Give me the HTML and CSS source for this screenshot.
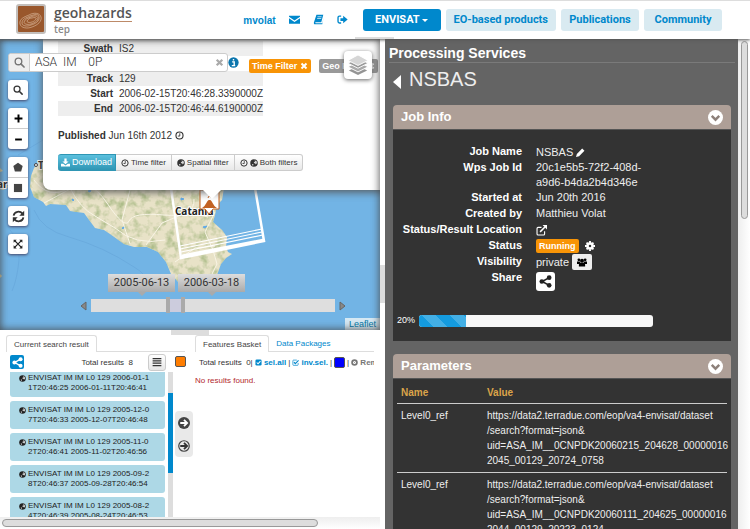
FILE: index.html
```html
<!DOCTYPE html>
<html lang="en">
<head>
<meta charset="utf-8">
<title>Geohazards TEP</title>
<link rel="stylesheet" href="styles.css">
</head>
<body>
<svg class="defs" aria-hidden="true">
  <symbol id="search" viewBox="0 0 16 16"><circle cx="6.5" cy="6.5" r="4.8" fill="none" stroke="currentColor" stroke-width="2"/><path d="M10 10l4.6 4.6" stroke="currentColor" stroke-width="2.4" stroke-linecap="round"/></symbol>
  <symbol id="globe" viewBox="0 0 16 16"><circle cx="8" cy="8" r="7.5" fill="currentColor"/><path d="M9 3l4 1 1 4-2.500 3-1-2-3-1 1-2.500 2 .5zM4 10l3 .5-.5 2.500h-2z" fill="#fff" opacity=".8"/></symbol>
  <symbol id="clock" viewBox="0 0 16 16"><circle cx="8" cy="8" r="6.300" fill="none" stroke="currentColor" stroke-width="2"/><path d="M8.500 4v5H5" fill="none" stroke="currentColor" stroke-width="1.600"/></symbol>
  <symbol id="share" viewBox="0 0 16 16"><path d="M12.500 3.200L4 8l8.500 4.800" fill="none" stroke="currentColor" stroke-width="2"/><circle cx="12.500" cy="3.300" r="2.900" fill="currentColor"/><circle cx="3.500" cy="8" r="2.900" fill="currentColor"/><circle cx="12.500" cy="12.700" r="2.900" fill="currentColor"/></symbol>
  <symbol id="cross" viewBox="0 0 16 16"><path d="M3 3l10 10M13 3L3 13" stroke="currentColor" stroke-width="4"/></symbol>
  <symbol id="check" viewBox="0 0 16 16"><rect x="1" y="1" width="14" height="14" rx="3" fill="currentColor"/><path d="M4 8l3 3 5.500-6" fill="none" stroke="#fff" stroke-width="2.400"/></symbol>
  <symbol id="down" viewBox="0 0 16 16"><circle cx="8" cy="8" r="8" fill="#fff"/><path d="M4 6.300l4 4 4-4" fill="none" stroke="#8d807a" stroke-width="2.600"/></symbol>
  <symbol id="arrow" viewBox="0 0 16 16"><path d="M3 8h9M8 3.800L12.200 8 8 12.200" fill="none" stroke="currentColor" stroke-width="2.400"/></symbol>
</svg>

<header class="topbar">
  <a class="brand" href="#">
    <svg class="logo" viewBox="0 0 30 30"><rect x="1" y="1" width="28" height="28" rx="2" fill="#99572c" stroke="#c3bfbc" stroke-width="2"/><g fill="none" stroke="#e0c2a8" stroke-width=".6"><path d="M4 20c-1-5 4-7 9-9 5-3 11-2 12 2s-3 8-9 10c-5 2-11 1-12-3z"/><path d="M6 19c0-4 4-5 8-7 5-2 9-2 9 1 1 4-4 7-8 8-4 2-9 1-9-2z"/><path d="M8 18c1-3 4-4 7-5 3-2 7-1 7 1 0 3-4 5-7 6-4 1-7 0-7-2z"/><path d="M11 17c1-2 3-3 5-3 3-1 5 0 4 1-1 3-9 5-9 2z"/></g></svg>
    <span class="brand-text"><span class="brand-name">geohazards</span><span class="brand-sub">tep</span></span>
  </a>
  <div class="user">
    <a href="#">mvolat</a>
    <a href="#" aria-label="Messages"><svg class="i11" viewBox="0 0 16 16"><path d="M0 2.500h16v1.500L8 9.500 0 4zM0 6l8 5.500L16 6v8H0z" fill="currentColor"/></svg></a>
    <a href="#" aria-label="Documentation"><svg class="i11" viewBox="0 0 16 16"><path d="M5 1h10l-3 11H4c-1 0-1 1.500 0 1.500h9.500L15.500 5 13.500 15H3C1 15 1 13 1.500 11.500z" fill="currentColor"/><path d="M6.500 4h6M6 6.500h6" stroke="#fff"/></svg></a>
    <a href="#" aria-label="Sign out"><svg class="i11" viewBox="0 0 16 16"><path d="M6 3H3.500Q1.500 3 1.500 5v6q0 2 2 2H6" fill="none" stroke="currentColor" stroke-width="2"/><path d="M5 6h4V2.500L15.500 8 9 13.500V10H5z" fill="currentColor"/></svg></a>
  </div>
  <nav class="nav">
    <a class="active" href="#">ENVISAT <span class="caret"></span></a>
    <a href="#">EO-based products</a>
    <a href="#">Publications</a>
    <a href="#">Community</a>
  </nav>
  <span class="pull"></span>
</header>

<main class="layout">
  <div class="left">
    <section class="map" aria-label="Map">
      <svg class="basemap" viewBox="0 39 380 291" preserveAspectRatio="xMinYMin slice">
        <defs>
          <filter id="relief" x="0" y="0" width="100%" height="100%" color-interpolation-filters="sRGB"><feTurbulence type="fractalNoise" baseFrequency=".12" numOctaves="3" seed="8"/><feColorMatrix values="0 0 0 0 .68  0 0 0 0 .74  0 0 0 0 .54  2.500 0 0 0 -1.100"/></filter>
          <clipPath id="island"><path id="coast" d="M50 155L39 162 34 168 31 176 30 187 34 197 43 202 46 206 50 204 66 205 70 211 84 213 95 228 104 230 110 234 124 244 134 247 147 247 158 252 166 262 171 274 180 284 200 288 212 284 217 275 221 264 226 258 232 254 228 252 226 247 227 237 222 230 213 222 215 215 217 205 222 200 224 188V155z"/></clipPath>
        </defs>
        <rect y="39" width="380" height="291" fill="#72b4e5"/>
        <path d="M34 210q8 20 35 27 35 10 65 30 14 8 16 20M10 230q10 10 9 30-2 20-7 31M18 155l30-18" fill="none" stroke="#64a4d8" stroke-width=".6"/>
        <path d="M0 168l3 3-3 1zM0 181l5 2 3 4-5 3-3-1zM0 274l2 2-2 2z" fill="#d9cfa4"/>
        <g clip-path="url(#island)">
          <rect x="28" y="150" width="210" height="142" fill="#e8e2c7"/>
          <rect x="28" y="150" width="210" height="142" filter="url(#relief)"/>
          <g fill="none" stroke="#f8f4e5" stroke-width="1"><path d="M34 180q15 20 35 8t38 15 22 18 35-6 30-16M70 188q10 20 25 28l20 12q20 18 50 12M130 190l-8 30 8 24M44 203l30-16M146 245l16-22 26-11 20 5M215 212l-10 20 8 18 4 14-10 20M175 262l20-14 20-2"/></g>
          <path d="M72 199l2 1-1 1zM88 191l3-1-1 2zM122 228l2-1-1 2zM181 198l3 1-3 1zM203 227l4-1-2 2z" fill="#5fa9e8" stroke="#5fa9e8"/>
        </g>
        <path d="M171 188l10 70 83-17-9-53" fill="none" stroke="#fff" stroke-width="2.500"/>
        <path d="M180 246l82-17M180 249l82-17M181 252l82-17" stroke="#fff" stroke-width="1.200"/>
        <path d="M182 256l82-16" stroke="#fff" stroke-width="3"/>
        <circle cx="36" cy="165" r="1.500" fill="#fff" stroke="#444"/>
        <g class="map-label"><text x="38" y="169">T</text><text x="-3" y="188">ar</text><text x="175" y="215">Catania</text></g>
        <path d="M200 190h19v19h-6l-4 5-4-5h-5z" fill="#fff" stroke="#c26223"/><path d="M202 208c4-2 5-8 7-8h1c2 0 3 6 7 8z" fill="#c26223"/><path d="M208 198l1-2 2 1" stroke="#c26223" fill="none"/>
      </svg>

      <article class="popup">
        <table class="meta">
          <tr><th scope="row">Swath</th><td>IS2</td></tr>
          <tr><th></th><td></td></tr>
          <tr><th scope="row">Track</th><td>129</td></tr>
          <tr><th scope="row">Start</th><td>2006-02-15T20:46:28.3390000Z</td></tr>
          <tr><th scope="row">End</th><td>2006-02-15T20:46:44.6190000Z</td></tr>
        </table>
        <p class="published"><b>Published</b> Jun 16th 2012 <svg class="i9"><use href="#clock"/></svg></p>
        <div class="btn-group">
          <button class="primary"><svg class="i9" viewBox="0 0 16 16"><path d="M6 1h4v5h3.500L8 11 2.500 6H6zM0 10h4l4 3.500L12 10h4v5H0z" fill="currentColor"/></svg>Download</button>
          <button><svg class="i8"><use href="#clock"/></svg>Time filter</button>
          <button><svg class="i8"><use href="#globe"/></svg>Spatial filter</button>
          <button><svg class="i8"><use href="#clock"/></svg><svg class="i8"><use href="#globe"/></svg>Both filters</button>
        </div>
      </article>

      <div class="filters">
        <div class="searchbox">
          <label for="q" aria-label="Search"><svg class="i11"><use href="#search"/></svg></label>
          <input id="q" type="text" value="ASA  IM    0P">
          <button aria-label="Clear"><svg class="i9"><use href="#cross"/></svg></button>
        </div>
        <svg class="i11 info" viewBox="0 0 16 16"><circle cx="8" cy="8" r="7.500" fill="#0b75ad"/><path d="M6 7h3v5M5.500 12.500h5M7 4h2" stroke="#fff" stroke-width="2" fill="none"/></svg>
        <button class="tag on">Time Filter <svg class="i8"><use href="#cross"/></svg></button>
        <button class="tag">Geo Filter <svg class="i8"><use href="#cross"/></svg></button>
      </div>
      <button class="layers" aria-label="Layers"><svg viewBox="0 0 24 24"><path d="M12 13l10 5-10 5-10-5z" fill="#949494"/><path d="M12 8.500l11 5.500-11 5.500L1 14z" fill="#aaa" stroke="#fff"/><path d="M12 4.500L23 10l-11 5.500L1 10z" fill="#999" stroke="#fff"/><path d="M12 1l11 6-11 5.500L1 7z" fill="#d6d6d6" stroke="#fff"/></svg></button>

      <div class="tools">
        <div><button aria-label="Find"><svg class="i10"><use href="#search"/></svg></button></div>
        <div><button aria-label="Zoom in"><svg class="i9" viewBox="0 0 16 16"><path d="M8 1v14M1 8h14" stroke="#000" stroke-width="3.500"/></svg></button><button aria-label="Zoom out"><svg class="i9" viewBox="0 0 16 16"><path d="M2 8h12" stroke="#000" stroke-width="3.500"/></svg></button></div>
        <div><button aria-label="Draw polygon"><svg class="i10" viewBox="0 0 16 16"><path d="M8 1l7.500 5.500L13 15H3L.5 6.500z" fill="#444"/></svg></button><button aria-label="Draw rectangle"><svg class="i10" viewBox="0 0 16 16"><path d="M1.500 1.500h13v13h-13z" fill="#444"/></svg></button></div>
        <div><button aria-label="Refresh"><svg class="i13" viewBox="0 0 16 16"><path d="M2 7c1-6 8-6 11-2.500M14 9c-1 6-8 6-11 2.500" fill="none" stroke="#333" stroke-width="2.200"/><path d="M15 1v6H9zM1 15V9h6z" fill="#333"/></svg></button></div>
        <div><button aria-label="Full extent"><svg class="i10" viewBox="0 0 16 16"><path d="M3 3l10 10M13 3L3 13" stroke="#222" stroke-width="2"/><path d="M1 1h5L1 6zM15 1v5l-5-5zM1 15v-5l5 5zM15 15h-5l5-5z" fill="#222"/></svg></button></div>
      </div>

      <div class="timeline">
        <div class="dates"><span>2005-06-13</span><span>2006-03-18</span></div>
        <div class="slider">
          <svg class="nudge" viewBox="0 0 7 10"><path d="M6 1v8L1 5z" fill="#888" stroke="#666"/></svg>
          <div class="track"><i></i><b></b><i></i></div>
          <svg class="nudge" viewBox="0 0 7 10"><path d="M1 1v8l5-4z" fill="#888" stroke="#666"/></svg>
        </div>
      </div>
      <a class="attribution" href="#">Leaflet</a>
    </section>

    <div class="split-h"><span></span></div>

    <section class="results">
      <div class="columns">
        <div class="current">
          <div class="tabs"><a class="sel" href="#">Current search result</a></div>
          <div class="bar">
            <button class="share-btn" aria-label="Share"><svg class="i11"><use href="#share"/></svg></button>
            <span class="total">Total results&nbsp; 8</span>
            <button class="list-btn" aria-label="List"><svg class="i10" viewBox="0 0 16 16"><path d="M1 2.500h14M1 6.200h14M1 9.900h14M1 13.600h14" stroke="#333" stroke-width="2"/></svg></button>
          </div>
          <div class="scroller">
            <ul class="list">
              <li><svg class="i7"><use href="#globe"/></svg><span>ENVISAT IM IM L0 129 2006-01-1<br>1T20:46:25 2006-01-11T20:46:41</span></li>
              <li><svg class="i7"><use href="#globe"/></svg><span>ENVISAT IM IM L0 129 2005-12-0<br>7T20:46:33 2005-12-07T20:46:48</span></li>
              <li><svg class="i7"><use href="#globe"/></svg><span>ENVISAT IM IM L0 129 2005-11-0<br>2T20:46:41 2005-11-02T20:46:56</span></li>
              <li><svg class="i7"><use href="#globe"/></svg><span>ENVISAT IM IM L0 129 2005-09-2<br>8T20:46:37 2005-09-28T20:46:54</span></li>
              <li><svg class="i7"><use href="#globe"/></svg><span>ENVISAT IM IM L0 129 2005-08-2<br>4T20:46:39 2005-08-24T20:46:53</span></li>
            </ul>
            <div class="vbar"><span></span></div>
          </div>
        </div>
        <div class="middle">
          <button class="swatch orange" aria-label="Result colour"></button>
          <div class="moves">
            <button aria-label="Add selected"><svg class="i12" viewBox="0 0 16 16"><circle cx="8" cy="8" r="8" fill="#444"/><g color="#fff"><use href="#arrow"/></g></svg></button>
            <button aria-label="Add all"><svg class="i12" viewBox="0 0 16 16"><circle cx="8" cy="8" r="7" fill="none" stroke="#444" stroke-width="1.600"/><use href="#arrow"/></svg></button>
          </div>
        </div>
        <div class="basket">
          <div class="tabs"><a class="sel" href="#">Features Basket</a><a href="#">Data Packages</a></div>
          <div class="bar actions">
            <span>Total results&nbsp; 0|</span>
            <a href="#"><svg class="i7"><use href="#check"/></svg> sel.all</a><span>|</span>
            <a href="#"><svg class="i7" viewBox="0 0 16 16"><path d="M14 9v4q0 1.500-1.500 1.500h-9Q2 14.500 2 13V4q0-1.500 1.500-1.500H11" fill="none" stroke="currentColor" stroke-width="1.600"/><path d="M4.500 7l3 3.500L15 3" fill="none" stroke="currentColor" stroke-width="2.500"/></svg> inv.sel.</a><span>|</span>
            <button class="swatch blue" aria-label="Basket colour"></button><span>|</span>
            <a class="muted" href="#"><svg class="i7" viewBox="0 0 16 16"><circle cx="8" cy="8" r="5.500" fill="none" stroke="currentColor" stroke-width="4"/><path d="M6 6l4 4M10 6l-4 4" stroke="currentColor"/></svg> Remove</a>
          </div>
          <p class="none">No results found.</p>
        </div>
      </div>
      <div class="hbar"><span></span></div>
    </section>
  </div>

  <div class="split-v"><span></span></div>

  <section class="services">
    <h1>Processing Services</h1>
    <h2><svg class="back" viewBox="0 0 8 14"><path d="M8 0v14L0 7z" fill="#fff"/></svg>NSBAS</h2>

    <section class="panel job">
      <h3>Job Info <svg class="i15"><use href="#down"/></svg></h3>
      <div class="panel-body">
        <dl>
          <dt>Job Name</dt><dd class="row near">NSBAS <svg class="i9" viewBox="0 0 16 16"><path d="M11 1l4 4-9.500 9.500L0 16l1.500-5.500z" fill="#fff"/></svg></dd>
          <dt>Wps Job Id</dt><dd>20c1e5b5-72f2-408d-<br>a9d6-b4da2b4d346e</dd>
          <dt>Started at</dt><dd>Jun 20th 2016</dd>
          <dt>Created by</dt><dd>Matthieu Volat</dd>
          <dt>Status/Result Location</dt><dd class="row"><svg class="i11" viewBox="0 0 16 16"><path d="M8 3.500H3Q1.500 3.500 1.500 5v8q0 1.500 1.500 1.500h8q1.500 0 1.500-1.500V9" fill="none" stroke="#fff" stroke-width="1.600"/><path d="M6 10l7-7" stroke="#fff" stroke-width="2.200"/><path d="M9.500 0H16v6.500z" fill="#fff"/></svg></dd>
          <dt>Status</dt><dd class="row"><span class="running">Running</span><svg class="i10" viewBox="0 0 16 16"><circle cx="8" cy="8" r="4" fill="none" stroke="#fff" stroke-width="4"/><path d="M8 0v3M8 13v3M0 8h3M13 8h3M2.500 2.500l2 2M11.500 11.500l2 2M2.500 13.500l2-2M11.500 4.500l2-2" stroke="#fff" stroke-width="3"/></svg></dd>
          <dt>Visibility</dt><dd class="row near vis">private <button aria-label="Change visibility"><svg class="i10" viewBox="0 0 16 16"><circle cx="3" cy="4.500" r="2.200"/><circle cx="13" cy="4.500" r="2.200"/><circle cx="8" cy="6" r="3.200"/><path d="M0 7h5v4H0zM11 7h5v4h-5zM3 15v-3q0-3 2.500-3h5q2.500 0 2.500 3v3z"/></svg></button></dd>
          <dt>Share</dt><dd><button class="share-job" aria-label="Share job"><svg class="i13"><use href="#share"/></svg></button></dd>
        </dl>
        <div class="progress"><span>20%</span><div class="rail"><div class="fill" style="width:20%"></div></div></div>
      </div>
    </section>

    <section class="panel">
      <h3>Parameters <svg class="i15"><use href="#down"/></svg></h3>
      <div class="panel-body params">
        <table>
          <thead><tr><th scope="col">Name</th><th scope="col">Value</th></tr></thead>
          <tbody>
            <tr><td>Level0_ref</td><td>https://data2.terradue.com/eop/va4-envisat/dataset<br>/search?format=json&amp;<br>uid=ASA_IM__0CNPDK20060215_204628_00000016<br>2045_00129_20724_0758</td></tr>
            <tr><td>Level0_ref</td><td>https://data2.terradue.com/eop/va4-envisat/dataset<br>/search?format=json&amp;<br>uid=ASA_IM__0CNPDK20060111_204625_00000016<br>2044_00129_20223_0124</td></tr>
          </tbody>
        </table>
      </div>
    </section>
  </section>
  <div class="page-scroll"><span></span></div>
</main>
</body>
</html>
```
FILE: styles.css
```css
* { box-sizing: border-box; }
body {
  margin: 0;
  height: 100vh;
  display: flex;
  flex-direction: column;
  overflow: hidden;
  font: 10px/15px "Liberation Sans", sans-serif;
  color: #333;
  background: #fff;
}
a { color: #08c; text-decoration: none; }
button { font: inherit; color: inherit; margin: 0; padding: 0; border: 0; background: none; display: inline-flex; align-items: center; justify-content: center; }
p, h1, h2, h3, ul, dl, dd { margin: 0; padding: 0; }
svg { flex: none; vertical-align: -1px; }
.defs { position: absolute; width: 0; height: 0; }
.i7 { width: 7px; height: 7px; }
.i8 { width: 8px; height: 8px; }
.i9 { width: 9px; height: 9px; }
.i10 { width: 10px; height: 10px; }
.i11 { width: 11px; height: 11px; }
.i12 { width: 12px; height: 12px; }
.i13 { width: 13px; height: 13px; }
.i15 { width: 15px; height: 15px; }

/* Top bar */
.topbar { position: relative; flex: none; height: 39px; display: flex; align-items: center; padding: 0 28px 0 16px; border-top: 1px solid #ddd; z-index: 2; box-shadow: 0 1px 3px #555; background: #fff; }
.brand { display: flex; gap: 8px; color: #555; font-family: "Open Sans", sans-serif; font-weight: 600; }
.logo { width: 30px; height: 30px; }
.brand-text { display: flex; flex-direction: column; }
.brand-name { font-size: 14px; line-height: 17px; border-bottom: 1px solid #bd8a68; }
.brand-sub { font-size: 10px; line-height: 14px; color: #888; }
.user { margin-left: auto; display: flex; align-items: center; gap: 13px; font-weight: bold; }
.nav { display: flex; gap: 5px; margin-left: 15px; font: bold 11px/22px Roboto, sans-serif; }
.nav a { min-width: 78px; padding: 0 8px; text-align: center; border-radius: 3px; background: #d9eaf1; }
.nav a.active { background: #08c; color: #fff; }
.caret { display: inline-block; border: 3px solid transparent; border-top-color: #fff; border-bottom: 0; vertical-align: middle; }
.pull { position: absolute; right: 356px; bottom: 0; width: 39px; height: 2px; background: #ddd; }

/* Page grid */
.layout { flex: 1; min-height: 0; display: grid; grid-template-columns: 380fr 5px 353fr 12px; grid-template-rows: minmax(0, 1fr); }
.left { min-width: 0; display: grid; grid-template-rows: 291fr 5px 194fr; grid-template-columns: minmax(0, 1fr); }
.split-h { display: flex; justify-content: center; }
.split-h span { width: 38px; background: #ddd; }
.split-v { display: flex; align-items: center; }
.split-v span { width: 5px; height: 38px; background: #ddd; }

/* Map */
.map { position: relative; overflow: hidden; min-height: 0; }
.map::after { content: ""; position: absolute; inset: 0; box-shadow: inset 0 0 8px #444; pointer-events: none; }
.basemap { position: absolute; inset: 0; width: 100%; height: 100%; }
.map-label { font: bold 10px "Open Sans", sans-serif; fill: #222; stroke: #fff; stroke-width: 2px; paint-order: stroke; }
.popup { position: absolute; left: 43px; right: -12px; top: 0; padding: 2px 15px 19px; background: #fff; border-radius: 0 0 8px 8px; box-shadow: 0 2px 8px #555; }
.popup::after { content: ""; position: absolute; left: 160px; top: 100%; border: 9px solid transparent; border-top-color: #fff; border-bottom: 0; }
.meta { border-spacing: 0; width: 205px; }
.meta tr { height: 15px; }
.meta tr:nth-child(odd) { background: #eee; }
.meta th, .meta td { padding: 0; line-height: 15px; }
.meta th { width: 60px; text-align: right; }
.meta td { padding-left: 6px; white-space: nowrap; }
.published { margin: 12px 0 11px; }
.btn-group { display: flex; }
.btn-group button { height: 17px; padding: 0 5px; gap: 2px; border: 1px solid #ccc; border-left-width: 0; font-size: 8px; background: linear-gradient(#fff, #e8e8e8); white-space: nowrap; }
.btn-group .primary { padding: 0 3px; font-size: 9px; color: #fff; background: linear-gradient(#5bc0de, #2f96b4); border-color: #2f96b4; border-radius: 3px 0 0 3px; }
.btn-group button:last-child { border-radius: 0 3px 3px 0; }
.filters { position: absolute; left: 8px; top: 12px; display: flex; align-items: center; white-space: nowrap; }
.searchbox { width: 220px; height: 19px; display: flex; align-items: center; border: 1px solid #ccc; border-radius: 3px; background: #fff; overflow: hidden; color: #777; }
.searchbox label { width: 21px; height: 100%; display: flex; align-items: center; justify-content: center; background: #eee; border-right: 1px solid #ccc; }
.searchbox input { flex: 1; min-width: 0; border: 0; outline: 0; padding: 0 5px; font: 300 12px Roboto, sans-serif; color: #333; background: none; white-space: pre; }
.searchbox button { width: 16px; color: #aaa; }
.info { margin: 0 10px 0 0; }
.tag { height: 14px; padding: 0 3px; gap: 3px; margin: 8px 8px 0 0; border-radius: 2px; background: #999; color: #fff; font-size: 9px; font-weight: bold; }
.tag.on { background: #f89406; }
.layers { position: absolute; right: 8px; top: 12px; width: 28px; height: 28px; border-radius: 4px; background: #fff; box-shadow: 0 1px 4px #666; }
.layers svg { width: 22px; height: 22px; }
.tools { position: absolute; left: 8px; top: 41px; display: flex; flex-direction: column; gap: 8px; }
.tools div { display: flex; flex-direction: column; border-radius: 3px; background: #fff; box-shadow: 0 1px 3px #446; }
.tools button { width: 20px; height: 20px; }
.tools button + button { height: 21px; border-top: 1px solid #ccc; }
.timeline { position: absolute; left: 80px; right: 34px; top: 235px; }
.dates { display: flex; gap: 3px; margin-left: 28px; }
.dates span { position: relative; width: 67px; text-align: center; font: 11px/18px Roboto, sans-serif; background: linear-gradient(#ddd, #aaa); }
.dates span::after { content: ""; position: absolute; left: 50%; margin-left: -4px; top: 100%; border: 4px solid transparent; border-top-color: #aaa; border-bottom: 0; }
.slider { display: flex; align-items: center; gap: 4px; margin-top: 7px; }
.nudge { width: 7px; height: 10px; }
.track { flex: 1; height: 13px; display: flex; padding-left: 75px; background: #dedede; }
.track i { width: 4px; height: 16px; margin-top: -2px; background: #aaa; }
.track b { width: 11px; background: #ccd; }
.attribution { position: absolute; right: 0; bottom: 0; padding: 0 4px; line-height: 12px; font-size: 9px; color: #0078a8; background: #d5e8f3; }

/* Results */
.results { display: flex; flex-direction: column; min-height: 0; overflow: hidden; }
.columns { flex: 1; min-height: 0; display: grid; grid-template-columns: 175px 20px minmax(0, 1fr); }
.current { display: flex; flex-direction: column; min-height: 0; }
.tabs { height: 17px; display: flex; align-items: flex-end; border-bottom: 1px solid #ddd; font-size: 8px; }
.current .tabs { margin-left: 6px; margin-right: -10px; }
.basket .tabs { margin-right: 6px; }
.tabs a { height: 16px; padding: 0 7px; line-height: 17px; white-space: nowrap; }
.tabs .sel { color: #444; border: 1px solid #ddd; border-bottom: 0; border-radius: 3px 3px 0 0; background: #fff; height: 17px; margin-bottom: -1px; }
.bar { flex: none; height: 20px; display: flex; align-items: center; font-size: 8px; white-space: nowrap; }
.current .bar { padding: 0 9px 0 10px; }
.share-btn { width: 14px; height: 14px; border-radius: 2px; background: #08c; color: #fff; }
.total { margin-left: auto; margin-right: 15px; }
.list-btn { width: 18px; height: 17px; border: 1px solid #ccc; border-radius: 3px; background: linear-gradient(#fff, #e6e6e6); }
.scroller { flex: 1; min-height: 0; display: flex; gap: 3px; margin: 0 2px 0 10px; overflow: hidden; }
.list { flex: 1; list-style: none; display: flex; flex-direction: column; gap: 4px; margin-top: -3px; font-size: 8px; line-height: 10px; color: #222; }
.list li { display: flex; gap: 2px; padding: 4px 0 4px 9px; border-radius: 3px; background: #add8e6; white-space: nowrap; }
.list svg { margin-top: 2px; }
.vbar { width: 5px; background: #ddd; padding-top: 21px; }
.vbar span { display: block; height: 80px; background: #08c; }
.middle { display: flex; flex-direction: column; padding-top: 21px; }
.swatch { flex: none; width: 11px; height: 11px; border: 1px solid #555; border-radius: 2px; }
.orange { background: #ff7d00; }
.blue { background: #00f; }
.moves { margin-top: 44px; display: flex; flex-direction: column; justify-content: space-around; width: 18px; height: 46px; border-radius: 4px; background: #e9e9e9; }
.basket { overflow: hidden; }
.actions { padding-left: 4px; gap: 2px; margin-right: 6px; overflow: hidden; }
.actions a { font-weight: bold; }
.actions .muted { color: #777; }
.none { margin-top: 1px; font-size: 8px; color: #b3282d; }
.hbar { height: 12px; padding: 2px; background: linear-gradient(#eee, #fff); }
.hbar span { display: block; width: 84%; height: 8px; border: 1px solid #999; border-radius: 4px; background: #ddd; }

/* Processing services */
.services { min-width: 0; overflow: hidden; background: #646464; color: #fff; padding: 5px 7px 0 8px; }
.services h1 { margin: 0 -4px; font-size: 14px; line-height: 18px; border-bottom: 1px solid #7a7a7a; }
.services h2 { display: flex; align-items: center; gap: 8px; font-size: 20px; line-height: 33px; font-weight: normal; color: #eee; margin-bottom: 9px; }
.back { width: 8px; height: 14px; margin-top: 5px; }
.panel { margin-bottom: 13px; }
.panel h3 { display: flex; justify-content: space-between; align-items: center; padding: 0 8px; font-size: 13px; line-height: 24px; background: #ae9f97; border-radius: 4px 4px 0 0; }
.panel-body { background: #333; border-top: 1px solid #555; padding: 14px 4px; }
.job .panel-body { height: 212px; }
dl { display: grid; grid-template-columns: 125px minmax(0, 1fr); column-gap: 14px; font-size: 11px; line-height: 15px; grid-auto-rows: minmax(16px, auto); }
dt { text-align: right; font-weight: bold; white-space: nowrap; }
dd { color: #eee; }
.row { display: flex; align-items: center; gap: 6px; height: 16px; }
.near { gap: 3px; }
.running { padding: 0 3px; font-size: 9px; line-height: 14px; font-weight: bold; color: #fff; background: #f89406; border-radius: 2px; }
.vis button { width: 20px; height: 16px; background: #eee; border-radius: 2px; }
.share-job { width: 19px; height: 19px; margin-top: 2px; border-radius: 3px; background: #fff; color: #222; }
.progress { display: flex; align-items: center; gap: 4px; margin-top: 22px; font-size: 9px; line-height: 13px; }
.rail { width: 71%; height: 12px; border-radius: 3px; background: #f7f7f7; overflow: hidden; }
.fill { height: 100%; background: repeating-linear-gradient(45deg, #149bdf 0 10px, #43afe5 10px 20px); }
.params { padding-top: 3px; }
.params table { width: 100%; table-layout: fixed; border-collapse: collapse; }
.params th, .params td { padding: 3px 4px; text-align: left; vertical-align: top; line-height: 15px; white-space: nowrap; border-bottom: 1px solid #ccc; color: #eee; }
.params th { color: #dba44a; }
.params th:first-child { width: 86px; }
.params td { padding: 4px; }

.page-scroll { padding: 2px 2px 0 3px; background: linear-gradient(90deg, #eee, #fff); }
.page-scroll span { display: block; height: 178px; border: 1px solid #999; border-radius: 4px; background: #ddd; }
```
